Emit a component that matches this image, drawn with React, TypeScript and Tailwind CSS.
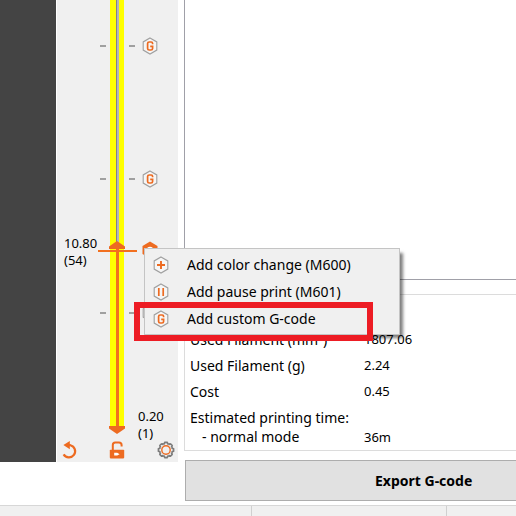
import { useState } from 'react'

type IconKind = 'color' | 'pause' | 'custom'

interface MenuEntry {
  kind: IconKind
  label: string
}

interface StatRow {
  label: string
  value: string
}

const LAYERS = 123
const LAYER_HEIGHT = 0.2

// Positions of custom G-code ticks, in percent of the rail height
const ticks = [10.6, 41.2, 72.1]

const menuEntries: MenuEntry[] = [
  { kind: 'color', label: 'Add color change (M600)' },
  { kind: 'pause', label: 'Add pause print (M601)' },
  { kind: 'custom', label: 'Add custom G-code' }
]

const stats: StatRow[] = [
  { label: 'Used Filament (mm³)', value: '1807.06' },
  { label: 'Used Filament (g)', value: '2.24' },
  { label: 'Cost', value: '0.45' }
]

function HexIcon({ kind }: { kind: IconKind }) {
  return (
    <svg viewBox="0 0 16 18" className="h-[18px] w-4 shrink-0" fill="none" aria-hidden="true">
      <path d="M8 1 L14.8 4.9 V13.1 L8 17 L1.2 13.1 V4.9 Z" stroke="#a0a0a0" strokeWidth="1.1" fill="#f6f6f6" />
      {kind === 'color' && <path d="M8 5 V13 M4 9 H12" stroke="#ed6b21" strokeWidth="1.9" />}
      {kind === 'pause' && <path d="M5.8 5 V13 M10.2 5 V13" stroke="#ed6b21" strokeWidth="1.7" />}
      {kind === 'custom' && (
        <path
          d="M10.6 7.2 V6.4 Q10.6 5 9.2 5 H7.2 Q5.6 5 5.6 6.6 V11.4 Q5.6 13 7.2 13 H9 Q10.6 13 10.6 11.4 V9.4 H8.2"
          stroke="#ed6b21"
          strokeWidth="1.7"
        />
      )}
    </svg>
  )
}

function RevertIcon() {
  return (
    <svg viewBox="0 0 16 18" className="h-[18px] w-4" fill="none" aria-hidden="true">
      <path d="M6 4.2 H8.4 A6.2 6.2 0 1 1 1.6 13.4" stroke="#ed6b21" strokeWidth="2.2" />
      <path d="M7.8 0 V8.2 L1.4 4.1 Z" fill="#ed6b21" />
    </svg>
  )
}

function UnlockIcon() {
  return (
    <svg viewBox="0 0 16 18" className="h-[18px] w-4" fill="none" aria-hidden="true">
      <path d="M3.8 9.5 V4 Q3.8 1.4 6.2 1.4 H10 Q12.6 1.4 12.6 4 V5.4" stroke="#ed6b21" strokeWidth="2" />
      <rect x="0.8" y="8.8" width="14.4" height="8.6" rx="0.8" fill="#ed6b21" />
      <path d="M5.2 11.8 H8.2 L10.6 13.2 L8.2 14.6 H5.2 Z" fill="#fff" />
    </svg>
  )
}

function GearIcon() {
  const teeth = [0, 45, 90, 135, 180, 225, 270, 315]
  return (
    <svg viewBox="0 0 18 18" className="size-[18px]" fill="none" aria-hidden="true">
      {teeth.map((angle) => (
        <path
          key={angle}
          d="M6.2 2.4 L7.3 2.8 L7.9 1.4 H10.1 L10.7 2.8 L11.8 2.4"
          stroke="#7c7c7c"
          strokeWidth="1.6"
          transform={`rotate(${angle} 9 9)`}
        />
      ))}
      <circle cx="9" cy="9" r="4.2" stroke="#ed6b21" strokeWidth="1.4" />
    </svg>
  )
}

const rangeClass =
  'pointer-events-none absolute inset-0 h-full w-4 appearance-none bg-transparent outline-none [direction:rtl] [writing-mode:vertical-lr] [&::-webkit-slider-thumb]:pointer-events-auto [&::-webkit-slider-thumb]:h-2 [&::-webkit-slider-thumb]:w-4 [&::-webkit-slider-thumb]:appearance-none [&::-webkit-slider-thumb]:bg-[#ed6b21]'

function LayerSlider() {
  const [upper, setUpper] = useState(54)
  const [lower, setLower] = useState(1)
  const share = ((upper - 1) / (LAYERS - 1)) * 98

  return (
    <section className="flex w-[121px] shrink-0 flex-col bg-[#f0f0f0]" aria-label="Layers">
      <div className="relative w-full flex-1">
        {/* Rail */}
        <div className="ml-[53px] flex h-[calc(100%-8px)] w-[14px] bg-[#ffff00] pl-1.5">
          <div className="relative w-[3px] border-l border-[#80808a] bg-[#b4b4bc]">
            <div className="absolute bottom-0 -left-px w-[3px] bg-[#f2701f]" style={{ height: `${share}%` }} />
          </div>
        </div>

        {/* Ticks */}
        {ticks.map((at) => (
          <div key={at} className="absolute left-[43px] flex h-0 items-center" style={{ top: `${at}%` }}>
            <span className="h-0.5 w-1.5 bg-[#a0a0a0]" />
            <span className="ml-[23px] h-0.5 w-1.5 bg-[#a0a0a0]" />
            <span className="ml-[7px]">
              <HexIcon kind="custom" />
            </span>
          </div>
        ))}

        {/* Current layer */}
        <div className="absolute top-[calc(57.6%-15px)] left-[7px] leading-[17px]">
          <div>{(upper * LAYER_HEIGHT).toFixed(2)}</div>
          <div>{`(${upper})`}</div>
        </div>
        <div className="absolute top-[57.6%] left-[41px] h-0.5 w-[39px] bg-[#f2701f]" />
        <svg viewBox="0 0 16 18" className="absolute top-[calc(57.6%-9px)] left-[85px] h-[18px] w-4" aria-hidden="true">
          <path d="M8 0.6 L15.5 4.9 V13.1 L8 17.4 L0.5 13.1 V4.9 Z" fill="#ed6b21" />
          <circle cx="8" cy="9" r="3.2" fill="#fff" />
        </svg>
        <div className="absolute bottom-[-8px] left-[81px] leading-[17px]">
          <div>{(lower * LAYER_HEIGHT).toFixed(2)}</div>
          <div>{`(${lower})`}</div>
        </div>

        {/* Thumbs */}
        <div className="absolute inset-y-0 left-[52px] w-4">
          <input
            type="range"
            aria-label="Upper layer"
            min={1}
            max={LAYERS}
            value={upper}
            onChange={(e) => setUpper(Number(e.target.value))}
            className={`${rangeClass} [&::-webkit-slider-thumb]:[clip-path:polygon(50%_0,100%_70%,100%_100%,0_100%,0_70%)]`}
          />
          <input
            type="range"
            aria-label="Lower layer"
            min={1}
            max={LAYERS}
            value={lower}
            onChange={(e) => setLower(Number(e.target.value))}
            className={`${rangeClass} [&::-webkit-slider-thumb]:[clip-path:polygon(0_0,100%_0,100%_30%,50%_100%,0_30%)]`}
          />
        </div>
      </div>

      <div className="flex h-7 items-center pt-1 pr-[3px] pl-[5px]">
        <button type="button" aria-label="Reset layer range">
          <RevertIcon />
        </button>
        <button type="button" aria-label="Unlock thumbs" className="ml-[31px]">
          <UnlockIcon />
        </button>
        <button type="button" aria-label="Slider settings" className="ml-auto">
          <GearIcon />
        </button>
      </div>
    </section>
  )
}

function TickMenu() {
  return (
    <div
      role="menu"
      className="absolute top-[248px] left-36 w-64 border border-[#c4c4c4] bg-[#f0f0f0] py-0.5 text-sm shadow-[4px_4px_3px_-1px_rgba(0,0,0,0.5)]"
    >
      {menuEntries.map((entry) => (
        <button key={entry.kind} type="button" role="menuitem" className="flex h-[27px] w-full items-center gap-[18px] pl-2 text-left">
          <HexIcon kind={entry.kind} />
          {entry.label}
        </button>
      ))}
      {/* Highlight around the custom G-code entry */}
      <div className="pointer-events-none absolute top-[53px] -left-[11px] h-[39px] w-[239px] border-[6px] border-[#ed1c24]" />
    </div>
  )
}

function SlicedInfo() {
  return (
    <section className="mt-[14px] border border-r-0 border-[#dcdcdc] pt-8 pb-[7px] pl-[5px]" aria-label="Sliced info">
      <table className="w-full text-left">
        <tbody>
          {stats.map((row) => (
            <tr key={row.label} className="h-[26px]">
              <th scope="row" className="w-[174px] text-sm font-normal">
                {row.label}
              </th>
              <td>{row.value}</td>
            </tr>
          ))}
          <tr className="h-[26px]">
            <th scope="row" colSpan={2} className="text-sm leading-[18px] font-normal">
              Estimated printing time:
            </th>
          </tr>
          <tr className="h-3 leading-3">
            <th scope="row" className="pl-3 text-sm leading-3 font-normal">
              - normal mode
            </th>
            <td>36m</td>
          </tr>
        </tbody>
      </table>
    </section>
  )
}

export default function App() {
  return (
    <div className="relative flex h-screen flex-col overflow-hidden bg-white font-['Noto_Sans',sans-serif] text-[13px] text-black">
      <main className="flex min-h-0 flex-1">
        <div className="mb-[43px] flex">
          <div className="mr-px w-14 bg-[#444444]" />
          <LayerSlider />
        </div>

        <div className="ml-1.5 flex min-w-0 flex-1 flex-col">
          <div className="min-h-0 flex-1 border-b border-l border-[#a0a0a8]" />
          <SlicedInfo />
          <button
            type="button"
            className="mt-[9px] mb-1 ml-px h-[41px] border border-r-0 border-[#adadad] bg-[#e1e1e1] pl-[189px] text-left text-sm font-bold"
          >
            Export G-code
          </button>
        </div>
      </main>

      <footer className="flex h-[11px] border-t border-[#d7d7d7] bg-[#f0f0f0]">
        <div className="w-[252px] border-r border-[#d0d0d0]" />
        <div className="w-[195px] border-r border-[#d0d0d0]" />
      </footer>

      <TickMenu />
    </div>
  )
}
